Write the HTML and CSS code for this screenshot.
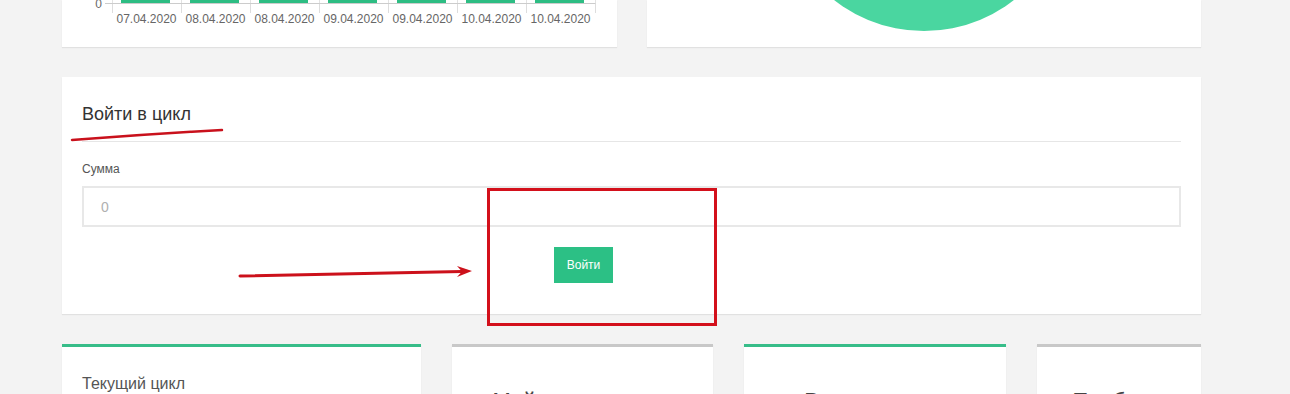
FILE: index.html
```html
<!DOCTYPE html>
<html lang="ru">
<head>
    <meta charset="UTF-8">
    <title>Войти в цикл</title>
    <link rel="stylesheet" href="styles.css">
</head>
<body>
    <div class="page">
        <div class="top-row">
            <div class="card chart-card">
                <div class="chart">
                    <div class="plot-row">
                        <div class="y-axis"><span>0</span><i class="y-tick"></i></div>
                        <div class="bars">
                            <div class="col"><div class="bar"></div></div>
                            <div class="col"><div class="bar"></div></div>
                            <div class="col"><div class="bar"></div></div>
                            <div class="col"><div class="bar"></div></div>
                            <div class="col"><div class="bar"></div></div>
                            <div class="col"><div class="bar"></div></div>
                            <div class="col"><div class="bar"></div></div>
                        </div>
                    </div>
                    <div class="ticks">
                        <i></i><i></i><i></i><i></i><i></i><i></i><i></i>
                    </div>
                    <div class="x-labels">
                        <span>07.04.2020</span>
                        <span>08.04.2020</span>
                        <span>08.04.2020</span>
                        <span>09.04.2020</span>
                        <span>09.04.2020</span>
                        <span>10.04.2020</span>
                        <span>10.04.2020</span>
                    </div>
                </div>
            </div>
            <div class="card pie-card">
                <div class="pie"></div>
            </div>
        </div>

        <div class="card enter-card">
            <div class="enter-head">
                <h3>Войти в цикл</h3>
            </div>
            <form class="enter-form" onsubmit="return false">
                <label for="sum">Сумма</label>
                <input type="text" id="sum" placeholder="0">
                <button class="btn" type="submit">Войти</button>
            </form>
        </div>

        <div class="stats-row">
            <div class="card stat green">
                <p class="stat-title">Текущий цикл</p>
            </div>
            <div class="card stat grey">
                <p class="stat-big">Мой вклад в цикл</p>
            </div>
            <div class="card stat green">
                <p class="stat-big">Всего в цикле</p>
            </div>
            <div class="card stat grey">
                <p class="stat-big">Прибыль</p>
            </div>
        </div>
    </div>

    <!-- red marks drawn on top of the screenshot -->
    <svg class="marks" width="1290" height="394" viewBox="0 0 1290 394">
        <path d="M72 140 Q150 134 222 130" fill="none" stroke="#c9111c" stroke-width="2.5" stroke-linecap="round"/>
        <rect x="488.5" y="189.5" width="227" height="135" fill="none" stroke="#d3101b" stroke-width="3"/>
        <path d="M240 276 L462 271.5" fill="none" stroke="#cc111b" stroke-width="3" stroke-linecap="round"/>
        <polygon points="472,271 457,266 462,271.5 457,277" fill="#cc111b"/>
    </svg>
</body>
</html>
```

FILE: styles.css
```css
* {
    box-sizing: border-box;
    margin: 0;
    padding: 0;
}

html, body {
    height: 100%;
    overflow: hidden;
}

body {
    font-family: 'Liberation Sans', Arial, sans-serif;
    background-color: #f3f3f3;
    color: #333;
}

.page {
    width: 1139px;
    margin-left: 62px;
}

.card {
    background-color: #fff;
    box-shadow: 0 1px 1px rgba(0, 0, 0, 0.07);
}

/* top row: chart + pie, scrolled half out of view */
.top-row {
    display: grid;
    grid-template-columns: 555px 554px;
    gap: 30px;
    height: 47px;
}

.chart-card,
.pie-card {
    height: 47px;
    overflow: hidden;
    display: flex;
    flex-direction: column;
    justify-content: flex-end;
}

.chart-card {
    padding-bottom: 20px;
}

.plot-row {
    display: flex;
}

.y-axis {
    width: 50px;
    display: flex;
    align-items: flex-end;
    justify-content: flex-end;
    font-size: 12px;
    color: #666;
}

.y-axis span {
    line-height: 12px;
    margin-bottom: -6px;
    margin-right: 3px;
}

.y-tick {
    width: 7px;
    border-bottom: 1px solid #ccc;
}

.bars {
    display: grid;
    grid-template-columns: repeat(7, 69px);
    border-bottom: 1px solid #ccc;
    border-right: 1px solid #e2e2e2;
}

.col {
    border-left: 1px solid #e2e2e2;
    height: 60px;
    display: flex;
    align-items: flex-end;
}

.bar {
    width: 49px;
    height: 56px;
    margin-left: 8px;
    background-color: #2dbd83;
}

.ticks {
    display: grid;
    grid-template-columns: repeat(7, 69px);
    margin-left: 50px;
    height: 9px;
    border-right: 1px solid #ddd;
    width: 484px;
}

.ticks i {
    border-left: 1px solid #ddd;
}

.x-labels {
    display: grid;
    grid-template-columns: repeat(7, 69px);
    margin-left: 50px;
    margin-top: -2px;
    font-size: 12px;
    line-height: 16px;
    color: #666;
    text-align: center;
}

.pie-card {
    align-items: center;
    padding-bottom: 16px;
}

.pie {
    flex: none;
    width: 292px;
    height: 292px;
    border-radius: 50%;
    background-color: #4ad6a0;
}

/* enter cycle */
.enter-card {
    margin-top: 30px;
    height: 237px;
    padding: 0 20px;
}

.enter-head {
    padding: 25px 0 15px;
    border-bottom: 1px solid #e6e6e6;
}

.enter-head h3 {
    font-size: 18px;
    font-weight: normal;
    line-height: 24px;
    color: #333;
}

.enter-form {
    padding-top: 19px;
}

.enter-form label {
    display: block;
    font-size: 12px;
    line-height: 17px;
    color: #555;
    margin-bottom: 8px;
}

.enter-form input {
    display: block;
    width: 100%;
    height: 41px;
    border: 2px solid #e8e8e8;
    padding: 0 17px;
    font-family: inherit;
    font-size: 14px;
    color: #555;
    outline: none;
}

.enter-form input::placeholder {
    color: #b0b0b0;
}

.btn {
    display: block;
    margin: 20px 0 0 472px;
    width: 59px;
    height: 36px;
    border: none;
    background-color: #2cc085;
    color: #fff;
    font-family: inherit;
    font-size: 12px;
    cursor: pointer;
}

/* stat cards */
.stats-row {
    display: grid;
    grid-template-columns: 359px 261px 262px 164px;
    gap: 31px;
    margin-top: 30px;
}

.stat {
    height: 120px;
    border-top: 3px solid #c8c8c8;
}

.stat.green {
    border-top-color: #37bd89;
}

.stat-title {
    padding: 26px 20px 0;
    font-size: 16px;
    line-height: 22px;
    color: #555;
}

.stat-big {
    padding-top: 39px;
    font-size: 22px;
    line-height: 30px;
    color: #444;
    text-align: center;
    white-space: nowrap;
}

.marks {
    position: absolute;
    top: 0;
    left: 0;
    pointer-events: none;
}
```
